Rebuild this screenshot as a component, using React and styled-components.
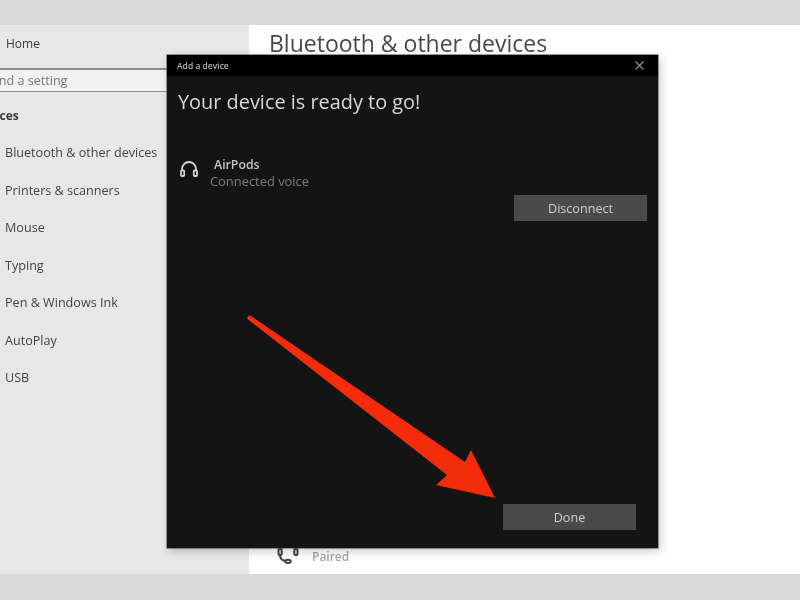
import React from 'react'
import styled, { createGlobalStyle } from 'styled-components'

const GlobalStyle = createGlobalStyle`
  html, body {
    margin: 0;
    padding: 0;
    background: #d9d9d9;
  }
  body {
    font-family: "Open Sans", "Noto Sans", sans-serif;
  }
`

const Page = styled.div`
  width: 800px;
  height: 600px;
  display: flex;
  flex-direction: column;
  overflow: hidden;
  filter: blur(0.45px);
`

const Band = styled.div`
  height: ${p => p.$h}px;
  flex: none;
  background: #d9d9d9;
`

const Settings = styled.div`
  position: relative;
  flex: 1;
  display: flex;
  min-height: 0;
`

const Sidebar = styled.aside`
  width: 249px;
  flex: none;
  background: #e7e7e7;
  display: flex;
  flex-direction: column;
  overflow: hidden;
`

const HomeRow = styled.div`
  height: 36px;
  padding: 0 0 7px 6px;
  display: flex;
  align-items: center;
  font-size: 12px;
  color: #3a3a3a;
`

const SearchBox = styled.div`
  height: 21px;
  background: #f2f2f2;
  border-top: 2px solid #8c8c8c;
  border-bottom: 1px solid #8c8c8c;
  display: flex;
  align-items: center;
  font-size: 12.6px;
  color: #777;
  overflow: hidden;
`

const SearchText = styled.span`
  margin-left: -11px;
  white-space: nowrap;
`

const GroupTitle = styled.div`
  height: 26px;
  padding-top: 16px;
  margin-left: -27px;
  font-size: 12px;
  font-weight: 700;
  line-height: 16px;
  color: #3a3a3a;
`

const NavList = styled.nav`
  display: flex;
  flex-direction: column;
`

const NavItem = styled.div`
  height: 37.5px;
  padding-left: 5px;
  display: flex;
  align-items: center;
  font-size: 12.6px;
  color: #444;
  white-space: nowrap;
`

const Main = styled.main`
  flex: 1;
  background: #fff;
  padding: 2px 0 10px 20px;
  display: flex;
  flex-direction: column;
  justify-content: space-between;
`

const PageTitle = styled.h1`
  margin: 0;
  font-size: 23px;
  line-height: 32px;
  font-weight: 400;
  color: #4a4a4a;
`

const DeviceRow = styled.div`
  display: flex;
  align-items: flex-end;
  gap: 13px;
  margin-left: 8px;
`

const PairedText = styled.span`
  font-size: 12px;
  line-height: 14px;
  font-weight: 600;
  color: #a6a6a6;
`

const Dialog = styled.section`
  position: absolute;
  left: 167px;
  top: 30px;
  width: 491px;
  height: 493px;
  background: #141414;
  box-shadow: 0 0 0 1px rgba(70, 80, 90, 0.55), 2px 3px 9px rgba(0, 0, 0, 0.22);
  display: flex;
  flex-direction: column;
`

const TitleBar = styled.header`
  height: 21px;
  flex: none;
  background: #000;
  padding: 0 14px 0 10px;
  display: flex;
  align-items: center;
  justify-content: space-between;
  font-size: 8.5px;
  font-weight: 600;
  color: #b5b5b5;
`

const DialogBody = styled.div`
  flex: 1;
  padding: 0 11px 18px 11px;
  display: flex;
  flex-direction: column;
`

const DialogTitle = styled.h2`
  margin: 11px 0 0;
  font-size: 19.9px;
  line-height: 30px;
  font-weight: 400;
  color: #d8d8d8;
`

const DeviceInfo = styled.div`
  margin-top: 40px;
  display: flex;
  align-items: flex-start;
  gap: 12px;
`

const IconSlot = styled.div`
  margin: 4px 0 0 2px;
  display: flex;
`

const DeviceText = styled.div`
  display: flex;
  flex-direction: column;
`

const DeviceName = styled.span`
  padding-left: 4px;
  font-size: 12.3px;
  line-height: 16px;
  font-weight: 600;
  color: #c4c4c4;
`

const DeviceStatus = styled.span`
  font-size: 12.9px;
  line-height: 16px;
  color: #7d7d7d;
`

const ActionButton = styled.button`
  width: 133px;
  height: 26px;
  border: 0;
  padding: 0;
  background: #4a4a4a;
  color: #cfcfcf;
  font-family: inherit;
  font-size: 12.6px;
  font-weight: 400;
  align-self: flex-end;
  margin-right: ${p => p.$inset || 0}px;
  margin-top: ${p => (p.$push ? 'auto' : '6px')};
`

const Arrow = styled.svg`
  position: absolute;
  left: 167px;
  top: 30px;
  width: 491px;
  height: 493px;
  pointer-events: none;
`

const CloseIcon = () => (
  <svg width="9" height="9" viewBox="0 0 9 9" fill="none" stroke="#8f8f8f" strokeWidth="1.2">
    <path d="M0.5 0.5L8.5 8.5M8.5 0.5L0.5 8.5" />
  </svg>
)

const Headphones = () => (
  <svg width="18" height="16" viewBox="0 0 18 16" fill="none" stroke="#d5d5d5" strokeWidth="1.8">
    <path d="M2 10V8a7 7 0 0 1 14 0v2" />
    <rect x="1" y="9.5" width="3.2" height="5.5" rx="1" />
    <rect x="13.8" y="9.5" width="3.2" height="5.5" rx="1" />
  </svg>
)

const HeadsetMic = () => (
  <svg width="22" height="28" viewBox="0 0 22 28" fill="none" stroke="#3e3e3e" strokeWidth="2">
    <path d="M3 14V9a8 8 0 0 1 16 0v5" />
    <rect x="1.5" y="13" width="3.2" height="6" rx="1" />
    <rect x="17.3" y="13" width="3.2" height="6" rx="1" />
    <path d="M3 19c0 3.5 2.5 5.5 6 6" />
    <ellipse cx="11" cy="25.3" rx="2.8" ry="1.6" />
  </svg>
)

const navItems = [
  'Bluetooth & other devices',
  'Printers & scanners',
  'Mouse',
  'Typing',
  'Pen & Windows Ink',
  'AutoPlay',
  'USB',
]

export default function App() {
  return (
    <Page>
      <GlobalStyle />
      <Band $h={25} />
      <Settings>
        <Sidebar>
          <HomeRow>Home</HomeRow>
          <SearchBox>
            <SearchText>Find a setting</SearchText>
          </SearchBox>
          <GroupTitle>Devices</GroupTitle>
          <NavList>
            {navItems.map(item => (
              <NavItem key={item}>{item}</NavItem>
            ))}
          </NavList>
        </Sidebar>
        <Main>
          <PageTitle>Bluetooth &amp; other devices</PageTitle>
          <DeviceRow>
            <HeadsetMic />
            <PairedText>Paired</PairedText>
          </DeviceRow>
        </Main>
        <Dialog>
          <TitleBar>
            <span>Add a device</span>
            <CloseIcon />
          </TitleBar>
          <DialogBody>
            <DialogTitle>Your device is ready to go!</DialogTitle>
            <DeviceInfo>
              <IconSlot>
                <Headphones />
              </IconSlot>
              <DeviceText>
                <DeviceName>AirPods</DeviceName>
                <DeviceStatus>Connected voice</DeviceStatus>
              </DeviceText>
            </DeviceInfo>
            <ActionButton>Disconnect</ActionButton>
            <ActionButton $push $inset={11}>Done</ActionButton>
          </DialogBody>
        </Dialog>
        <Arrow viewBox="167 55 491 493">
          <path
            d="M248 316.5 Q249 315 251 316 L465 462 L471 450 L495 498 L436 485 L447 475 L247.5 319 Q247 317.5 248 316.5 Z"
            fill="#f52c0c"
          />
        </Arrow>
      </Settings>
      <Band $h={26} />
    </Page>
  )
}
